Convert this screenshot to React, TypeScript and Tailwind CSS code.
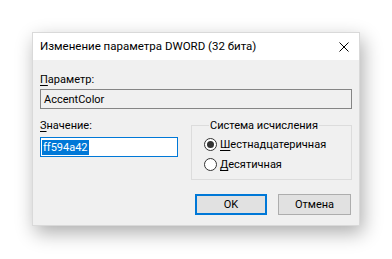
import { useState } from "react";

const font = { fontFamily: 'Roboto, "Noto Sans", Arial, sans-serif' };

function AccessKey({ letter, rest }: { letter: string; rest: string }) {
  return (
    <span>
      <span className="underline underline-offset-2">{letter}</span>
      {rest}
    </span>
  );
}

function Radio({
  checked,
  letter,
  rest,
  onSelect,
}: {
  checked: boolean;
  letter: string;
  rest: string;
  onSelect: () => void;
}) {
  return (
    <button
      className="flex h-[20px] items-center gap-[3px] text-left"
      onClick={onSelect}
      type="button"
    >
      <span className="flex h-[13px] w-[13px] items-center justify-center rounded-full border border-[#333333] bg-white">
        {checked && <span className="h-[7px] w-[7px] rounded-full bg-[#333333]" />}
      </span>
      <AccessKey letter={letter} rest={rest} />
    </button>
  );
}

export default function App() {
  const [radix, setRadix] = useState<"hex" | "dec">("hex");

  return (
    <div
      className="h-[259px] w-[392px] bg-white pl-[32px] pt-[32px] text-[11px] leading-[15px] text-black"
      style={font}
    >
      <div className="flex h-[194px] w-[328px] flex-col border border-[#d9d9d9] shadow-[3px_7px_18px_rgba(0,0,0,0.32)]">
        <div className="flex h-[27px] items-center justify-between bg-white pl-[7px] pr-[10px]">
          <span className="text-[11.5px]">Изменение параметра DWORD (32 бита)</span>
          <svg className="h-[10px] w-[10px]" viewBox="0 0 10 10">
            <path d="M0.5 0.5L9.5 9.5M9.5 0.5L0.5 9.5" stroke="#000" strokeWidth="1" />
          </svg>
        </div>

        <div className="flex flex-1 flex-col bg-[#f0f0f0] px-[7px] pt-[12px]">
          <label className="block">
            <AccessKey letter="П" rest="араметр:" />
          </label>
          <div className="mt-[2px] flex h-[20px] w-[312px] items-center border border-[#858585] bg-[#f0f0f0] px-[3px]">
            AccentColor
          </div>

          <div className="mt-[9px] flex gap-[13px]">
            <div className="flex w-[138px] flex-col">
              <label className="block">
                <AccessKey letter="З" rest="начение:" />
              </label>
              <div className="mt-[4px] flex h-[20px] items-center border border-[#0078d7] bg-white px-[1px]">
                <span className="bg-[#0078d7] px-[1px] text-white">ff594a42</span>
              </div>
            </div>

            <fieldset className="h-[62px] flex-1 border border-[#dcdcdc] pl-[12px]">
              <legend className="ml-[5px] px-[1px]">Система исчисления</legend>
              <div className="mt-[1px] flex flex-col">
                <Radio
                  checked={radix === "hex"}
                  letter="Ш"
                  onSelect={() => setRadix("hex")}
                  rest="естнадцатеричная"
                />
                <Radio
                  checked={radix === "dec"}
                  letter="Д"
                  onSelect={() => setRadix("dec")}
                  rest="есятичная"
                />
              </div>
            </fieldset>
          </div>

          <div className="mt-[14px] flex justify-end gap-[11px] pr-[1px]">
            <button
              className="h-[21px] w-[72px] border-2 border-[#0078d7] bg-[#e1e1e1]"
              type="button"
            >
              OK
            </button>
            <button
              className="h-[21px] w-[73px] border border-[#adadad] bg-[#e1e1e1]"
              type="button"
            >
              Отмена
            </button>
          </div>
        </div>
      </div>
    </div>
  );
}
